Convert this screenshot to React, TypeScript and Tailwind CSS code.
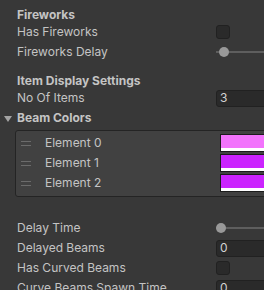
import React from 'react';

const labelFont = { fontFamily: 'Inter, "Noto Sans", sans-serif' };

function Row({ label, children, mt = true }: { label: string; children?: React.ReactNode; mt?: boolean }) {
  return (
    <div className={`flex h-[18px] items-center ${mt ? 'mt-[2px]' : ''}`}>
      <div className="w-[216px] shrink-0 pl-[17px] text-[12px] text-[#c4c4c4] whitespace-nowrap overflow-hidden">{label}</div>
      <div className="flex-1 flex items-center h-full">{children}</div>
    </div>
  );
}

function Header({ label }: { label: string }) {
  return (
    <div className="flex h-[17px] items-center pl-[17px] text-[12px] font-bold text-[#c4c4c4] whitespace-nowrap">
      {label}
    </div>
  );
}

function Checkbox() {
  return <div className="w-[14px] h-[14px] rounded-[3px] bg-[#2a2a2a] border border-[#212121]" />;
}

function Slider({ offset }: { offset: number }) {
  return (
    <div className="relative flex-1 h-full flex items-center">
      <div className="w-full h-[2px] bg-[#5e5e5e]" />
      <div
        className="absolute w-[10px] h-[10px] rounded-full bg-[#999999] top-[4px]"
        style={{ left: offset }}
      />
    </div>
  );
}

function Field({ value }: { value: string }) {
  return (
    <div className="flex-1 h-[17px] mr-[-6px] rounded-[3px] bg-[#2a2a2a] border border-[#212121] flex items-center pl-[3px] text-[12px] text-[#d2d2d2]">
      {value}
    </div>
  );
}

function Element({ name, color }: { name: string; color: string }) {
  return (
    <div className="flex h-[18px] items-center">
      <div className="w-[29px] shrink-0 flex flex-col gap-[3px] pl-[5px]">
        <div className="w-[10px] h-px bg-[#6b6b6b]" />
        <div className="w-[10px] h-px bg-[#6b6b6b]" />
      </div>
      <div className="w-[175px] shrink-0 text-[12px] text-[#c4c4c4]">{name}</div>
      <div className="flex-1 h-[18px] mr-[-6px] border border-[#1c1c1c] flex flex-col">
        <div className="flex-1" style={{ background: color }} />
        <div className="h-[3px] bg-white" />
      </div>
    </div>
  );
}

export default function App() {
  return (
    <div className="w-[264px] h-[290px] overflow-hidden bg-[#383838] pt-[6px]" style={labelFont}>
      <Header label="Fireworks" />
      <Row label="Has Fireworks" mt={false}>
        <Checkbox />
      </Row>
      <Row label="Fireworks Delay">
        <Slider offset={3} />
      </Row>

      <div className="h-[11px]" />
      <Header label="Item Display Settings" />
      <Row label="No Of Items" mt={false}>
        <Field value="3" />
      </Row>

      <div className="flex h-[18px] items-center mt-[2px]">
        <svg width="17" height="18" viewBox="0 0 17 18" className="shrink-0">
          <polygon points="4,7 12,7 8,13" fill="#a3a3a3" />
        </svg>
        <span className="text-[12px] font-bold text-[#c4c4c4]">Beam Colors</span>
      </div>

      <div className="ml-[15px] mr-[-8px] mt-[3px] rounded-[3px] border border-[#242424] bg-[#414141] pt-[3px] pb-[4px] flex flex-col gap-[2px]">
        <Element name="Element 0" color="#f273fc" />
        <Element name="Element 1" color="#cb24fe" />
        <Element name="Element 2" color="#cb24fe" />
      </div>

      <div className="h-[22px]" />
      <Row label="Delay Time" mt={false}>
        <Slider offset={0} />
      </Row>
      <Row label="Delayed Beams">
        <Field value="0" />
      </Row>
      <Row label="Has Curved Beams">
        <Checkbox />
      </Row>
      <Row label="Curve Beams Spawn Time">
        <Field value="0" />
      </Row>
    </div>
  );
}
